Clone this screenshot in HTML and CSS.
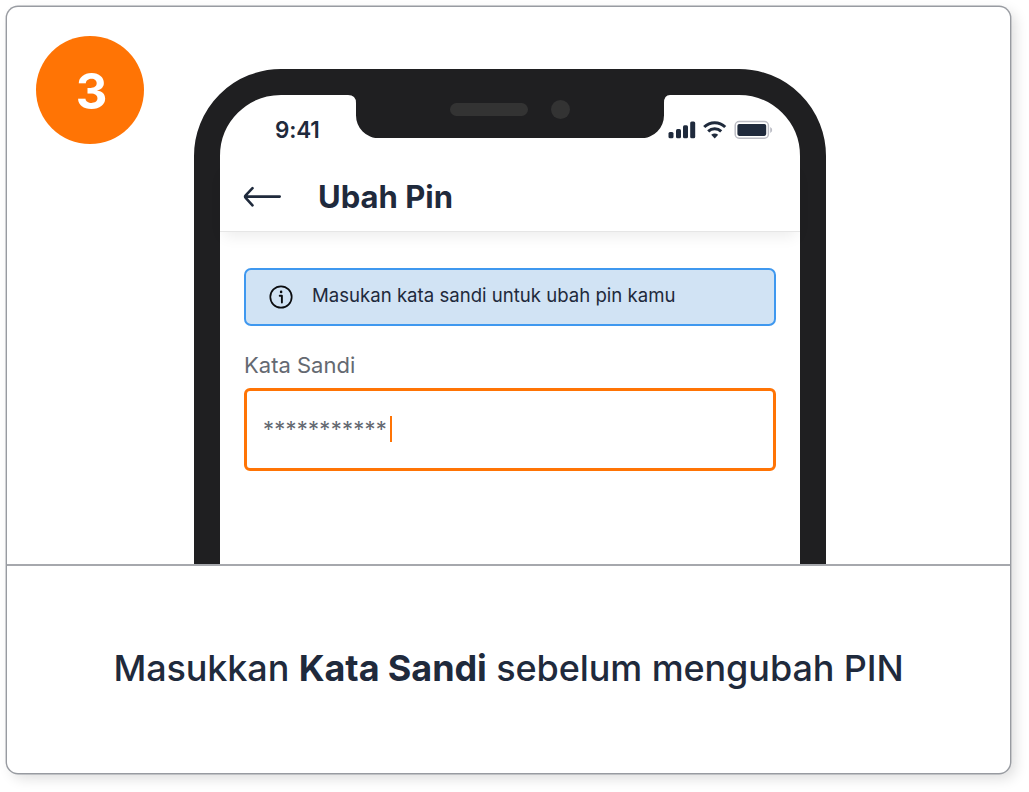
FILE: index.html
```html
<!DOCTYPE html>
<html lang="id">
<head>
    <meta charset="UTF-8">
    <meta name="viewport" content="width=device-width, initial-scale=1.0">
    <title>Ubah Pin</title>

    <link rel="stylesheet" href="styles.css">
</head>
<body>

    <div class="card">
        <!-- Step number -->
        <div class="step-badge">3</div>

        <!-- Phone preview -->
        <div class="preview">
            <div class="phone">
                <svg class="notch" width="330" height="44" viewBox="0 0 330 44">
                    <path d="M0 0H330V1H324Q318 1 318 9V21A23 23 0 0 1 295 44.300H33A23 23 0 0 1 10 21V9Q10 1 2 1H0Z" fill="#1f1f21"/>
                    <rect x="104" y="9" width="78" height="13" rx="6.500" fill="#333"/>
                    <circle cx="214.500" cy="15.500" r="9.500" fill="#333"/>
                </svg>

                <div class="status-bar">
                    <span class="time">9:41</span>
                    <svg class="status-icons" width="106" height="20" viewBox="0 0 106 20">
                        <g fill="#1f2a3c">
                            <rect x="0.500" y="12" width="5" height="6.300" rx="1.500"/>
                            <rect x="8" y="9" width="5" height="9.300" rx="1.500"/>
                            <rect x="15" y="5.200" width="5" height="13.100" rx="1.500"/>
                            <rect x="22.200" y="1.500" width="5" height="16.800" rx="1.500"/>
                        </g>
                        <g fill="none" stroke="#1f2a3c" stroke-width="3">
                            <path d="M36.200 7A15 15 0 0 1 57.200 7"/>
                            <path d="M40.200 11.300A9.400 9.400 0 0 1 53.200 11.300"/>
                        </g>
                        <path d="M43.200 14.800Q46.700 12 50.200 14.800L46.700 18.500Z" fill="#1f2a3c"/>
                        <rect x="67.200" y="1.600" width="33.200" height="16.600" rx="4" fill="none" stroke="#bcbdc5" stroke-width="1.500"/>
                        <rect x="69.400" y="3.900" width="28.800" height="12" rx="1.800" fill="#1f2a3c"/>
                        <path d="M102.200 7V13Q104.200 12 104.200 10T102.200 7Z" fill="#bcbdc5"/>
                    </svg>
                </div>

                <div class="app-bar">
                    <svg class="back" width="40" height="22" viewBox="0 0 40 22" fill="none" stroke="#1f2a3c" stroke-width="2.600" stroke-linecap="round" stroke-linejoin="round">
                        <path d="M36.700 10.600H2.500M9.500 2.200L2.700 9.300Q1.400 10.600 2.700 11.900L9.500 19.300"/>
                    </svg>
                    <h1>Ubah Pin</h1>
                </div>

                <div class="form">
                    <div class="notice">
                        <svg class="info" width="24" height="24" viewBox="0 0 24 24" fill="none" stroke="#0b0d10">
                            <circle cx="12" cy="12" r="10.700" stroke-width="1.700"/>
                            <path d="M10.700 10.700H12.900V17.500" stroke-width="1.900" stroke-linecap="round" stroke-linejoin="round"/>
                            <circle cx="12.100" cy="6.900" r="1.300" fill="#0b0d10" stroke="none"/>
                        </svg>
                        <span>Masukan kata sandi untuk ubah pin kamu</span>
                    </div>
                    <label class="label">Kata Sandi</label>
                    <div class="input">
                        <span class="stars">***********</span>
                        <span class="caret"></span>
                    </div>
                </div>
            </div>
        </div>

        <!-- Caption -->
        <p class="caption">Masukkan <b>Kata Sandi</b> sebelum mengubah PIN</p>
    </div>

</body>
</html>
```
FILE: styles.css
```css
/* Global Reset */
* {
    margin: 0;
    padding: 0;
    box-sizing: border-box;
}

body {
    font-family: 'Inter', sans-serif;
    background-color: #fff;
    color: #1f2a3c;
    padding: 7px;
    min-height: 100vh;
    overflow: hidden;
}

/* Card */
.card {
    position: relative;
    width: 1003px;
    height: 766px;
    border-radius: 11px;
    background-color: #fff;
    box-shadow: 0 0 0 1.4px #989ba1, 5px 5px 14px rgba(0, 0, 0, 0.14);
    display: flex;
    flex-direction: column;
}

.step-badge {
    position: absolute;
    top: 29px;
    left: 29px;
    width: 108px;
    height: 108px;
    border-radius: 50%;
    background-color: #ff7405;
    color: #fff;
    font-size: 49px;
    font-weight: 700;
    line-height: 111px;
    text-align: center;
    padding-left: 3px;
}

.preview {
    height: 559px;
    padding-top: 62px;
    overflow: hidden;
    border-bottom: 2px solid #a6a8ad;
    display: flex;
    padding-left: 187px;
}

/* Phone */
.phone {
    position: relative;
    width: 632px;
    height: 640px;
    border: 26px solid #1f1f21;
    border-radius: 87px 87px 0 0;
}

.notch {
    position: absolute;
    top: -1px;
    left: 126px;
}

.status-bar {
    height: 68px;
    padding: 19px 26px 0 55px;
    display: flex;
    justify-content: space-between;
    align-items: flex-start;
}

.time {
    font-size: 22.5px;
    font-weight: 600;
    line-height: 32px;
    letter-spacing: -0.2px;
}

.status-icons {
    margin-top: 6px;
}

.app-bar {
    height: 69px;
    padding-left: 23px;
    display: flex;
    align-items: center;
    border-bottom: 1px solid #e6e6e6;
    box-shadow: 0 8px 14px -4px rgba(0, 0, 0, 0.08);
}

.app-bar h1 {
    margin-left: 35px;
    font-size: 31px;
    font-weight: 700;
    line-height: 40px;
}

/* Form */
.form {
    padding: 36px 24px 0;
    display: flex;
    flex-direction: column;
}

.notice {
    height: 58px;
    padding-left: 23px;
    border: 2px solid #3f98ef;
    border-radius: 7px;
    background-color: #d1e3f4;
    display: flex;
    align-items: center;
    font-size: 18.6px;
    line-height: 26px;
}

.notice span {
    margin: -5px 0 0 19px;
}

.label {
    margin-top: 24px;
    font-size: 22px;
    line-height: 30px;
    color: #646971;
}

.input {
    height: 83px;
    margin-top: 8px;
    padding-left: 16px;
    border: 3px solid #ff7405;
    border-radius: 6px;
    display: flex;
    align-items: center;
    color: #646971;
}

.stars {
    margin-top: -2px;
    font-size: 22px;
    line-height: 30px;
    letter-spacing: 0.25px;
}

.caret {
    width: 2px;
    height: 26px;
    margin: -2px 0 0 3px;
    background-color: #ff7405;
}

/* Caption */
.caption {
    flex: 1;
    padding-bottom: 3px;
    display: flex;
    align-items: center;
    justify-content: center;
    font-size: 36px;
    font-weight: 450;
    letter-spacing: -0.1px;
    white-space: pre;
}
```
